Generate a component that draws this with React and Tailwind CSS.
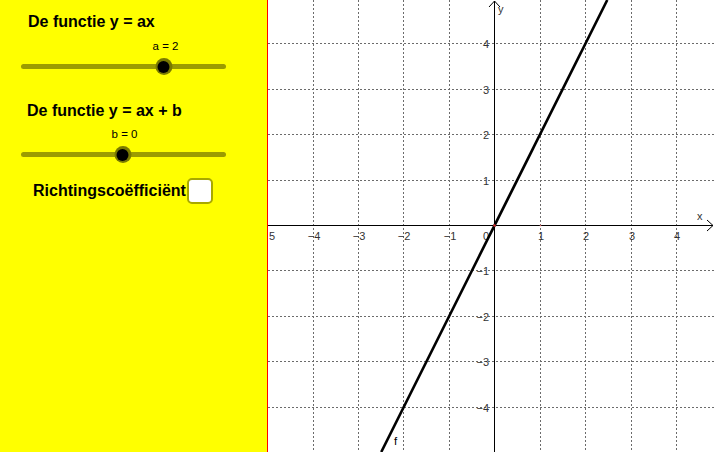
import React from "react";

const OX = 494.5;
const OY = 225.5;
const U = 45.5;

const Slider = ({label, value, min, max, className}) => {
    const pct = ((value - min) / (max - min)) * 100;
    return (
        <div className={"relative ml-[21px] w-[205px] h-[34px] " + className}>
            <div
                className="absolute top-0 -translate-x-1/2 whitespace-nowrap text-[11.5px] leading-none text-black"
                style={{left: `calc(${pct}% + 1px)`}}
            >
                {label}
            </div>
            <div className="absolute left-0 right-0 top-[23px] h-[5px] rounded-full bg-[#9c9c00]"/>
            <div
                className="absolute top-[17px] w-[17px] h-[17px] -translate-x-1/2 rounded-full bg-[#7a7a00] flex items-center justify-center"
                style={{left: `calc(${pct}% - 1px)`}}
            >
                <div className="w-[12px] h-[12px] rounded-full bg-black"/>
            </div>
        </div>
    );
};

const Graph = () => {
    const ticks = [-4, -3, -2, -1, 1, 2, 3, 4];
    const vx = [313.5, 358.5, 403.5, 449.5, 540.5, 585.5, 631.5, 676.5];
    const hy = [407.5, 361.5, 316.5, 270.5, 180.5, 134.5, 89.5, 43.5];
    const label = n => (n < 0 ? "\u2212" + Math.abs(n) : String(n));

    // f(x) = 2x clipped to the view
    const yTop = 0, yBot = 452;
    const x1 = OX + ((OY - yTop) / U / 2) * U;
    const x2 = OX - ((yBot - OY) / U / 2) * U;

    return (
        <svg className="block" width="447" height="452" viewBox="268 0 447 452"
             style={{fontFamily: '"Liberation Sans", Arial, sans-serif'}}>
            <rect x="268" y="0" width="447" height="452" fill="#ffffff"/>
            {vx.map(x => (
                <line key={"v" + x} x1={x} y1="0" x2={x} y2="452" stroke="#6b6b6b" strokeWidth="1" strokeDasharray="2 2"/>
            ))}
            {hy.map(y => (
                <line key={"h" + y} x1="268" y1={y} x2="715" y2={y} stroke="#6b6b6b" strokeWidth="1" strokeDasharray="2 2"/>
            ))}

            {/* axes */}
            <line x1="268" y1={OY} x2="713" y2={OY} stroke="#000" strokeWidth="1"/>
            <polyline points={`707,220 713,${OY} 707,231`} fill="none" stroke="#000" strokeWidth="1"/>
            <line x1={OX} y1="452" x2={OX} y2="1" stroke="#000" strokeWidth="1"/>
            <polyline points={`489,7 ${OX},1 500,7`} fill="none" stroke="#000" strokeWidth="1"/>

            {/* tick labels; the minus of -5 sits under the panel edge */}
            <text x="269" y="240" fontSize="11" fill="#333">5</text>
            {ticks.map((n, i) => (
                <text key={"tx" + n} x={vx[i] + 0.5} y="240" fontSize="11" fill="#333" textAnchor="middle">{label(n)}</text>
            ))}
            {ticks.map((n, i) => (
                <text key={"ty" + n} x="489" y={hy[i] + 4} fontSize="11" fill="#333" textAnchor="end">{label(n)}</text>
            ))}
            <text x="489" y="240" fontSize="11" fill="#333" textAnchor="end">0</text>
            <text x="697" y="220" fontSize="11" fill="#333">x</text>
            <text x="498" y="13" fontSize="11" fill="#333">y</text>

            {/* function */}
            <line x1={x1} y1={yTop} x2={x2} y2={yBot} stroke="#000" strokeWidth="2.6"/>
            <circle cx={OX} cy={OY} r="1.2" fill="#e03030"/>
            <circle cx={540.5} cy={OY} r="0.8" fill="#e06060"/>
            <text x="394" y="445" fontSize="11.5" fill="#000">f</text>
        </svg>
    );
};

export default function App() {
    return (
        <div className="flex w-[715px] h-[452px] overflow-hidden bg-white"
             style={{fontFamily: '"Liberation Sans", Arial, sans-serif'}}>
            <div className="w-[268px] h-full shrink-0 bg-[#ffff00] border-r border-[#ff0000] flex flex-col">
                <div className="mt-[14px] ml-[28px] text-[16px] leading-[16px] font-bold text-black whitespace-nowrap">
                    De functie y = ax
                </div>
                <Slider label="a = 2" value={2} min={-5} max={5} className="mt-[11px]"/>
                <div className="mt-[28px] ml-[27px] text-[16px] leading-[16px] font-bold text-black whitespace-nowrap">
                    De functie y = ax + b
                </div>
                <Slider label="b = 0" value={0} min={-5} max={5} className="mt-[10px]"/>
                <div className="mt-[15px] ml-[33px] flex items-center gap-[1px]">
                    <span className="text-[16px] leading-[16px] font-bold text-black whitespace-nowrap">
                        Richtingscoëfficiënt
                    </span>
                    <div className="w-[26px] h-[26px] rounded-[5px] border-2 border-[#a8a800] bg-white"/>
                </div>
            </div>
            <Graph/>
        </div>
    );
}
